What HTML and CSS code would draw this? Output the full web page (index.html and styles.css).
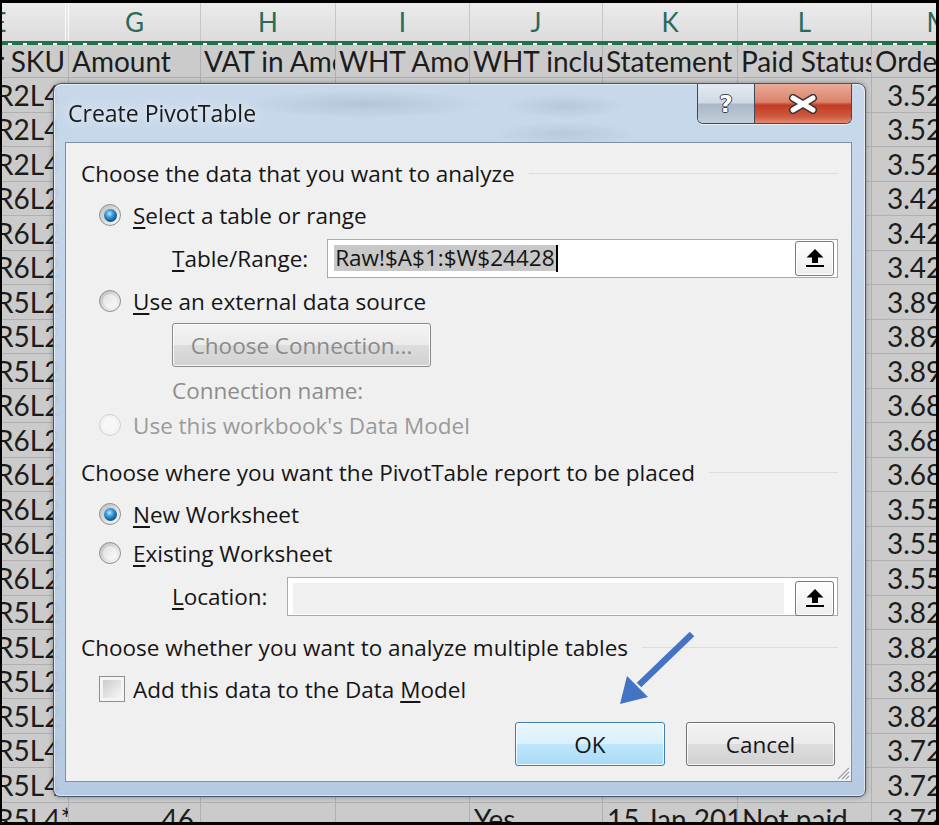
FILE: index.html
```html
<!DOCTYPE html>
<html>
<head>
    <meta charset="utf-8">
    <title>Create PivotTable</title>
    <link rel="stylesheet" href="styles.css">
</head>
<body>
<div class="screen">
    <!-- worksheet behind the dialog (cells hidden by the dialog are left empty) -->
    <div class="sheet">
        <div class="row letters">
            <div class="c col-e">E</div><div class="c col-g">G</div><div class="c col-h">H</div><div class="c col-i">I</div><div class="c col-j">J</div><div class="c col-k">K</div><div class="c col-l">L</div><div class="c col-m">M</div>
        </div>
        <div class="selbar"></div>
        <div class="row titles">
            <div class="c col-e">Seller SKU</div><div class="c col-g">Amount</div><div class="c col-h">VAT in Amount</div><div class="c col-i">WHT Amount</div><div class="c col-j">WHT included</div><div class="c col-k">Statement Date</div><div class="c col-l">Paid Status</div><div class="c col-m">Order Item</div>
        </div>
        <div class="row"><div class="c col-e">R2L4</div><div class="c col-g"></div><div class="c col-h"></div><div class="c col-i"></div><div class="c col-j"></div><div class="c col-k"></div><div class="c col-l"></div><div class="c col-m">3.52</div></div>
        <div class="row"><div class="c col-e">R2L4</div><div class="c col-g"></div><div class="c col-h"></div><div class="c col-i"></div><div class="c col-j"></div><div class="c col-k"></div><div class="c col-l"></div><div class="c col-m">3.52</div></div>
        <div class="row"><div class="c col-e">R2L4</div><div class="c col-g"></div><div class="c col-h"></div><div class="c col-i"></div><div class="c col-j"></div><div class="c col-k"></div><div class="c col-l"></div><div class="c col-m">3.52</div></div>
        <div class="row"><div class="c col-e">R6L2</div><div class="c col-g"></div><div class="c col-h"></div><div class="c col-i"></div><div class="c col-j"></div><div class="c col-k"></div><div class="c col-l"></div><div class="c col-m">3.42</div></div>
        <div class="row"><div class="c col-e">R6L2</div><div class="c col-g"></div><div class="c col-h"></div><div class="c col-i"></div><div class="c col-j"></div><div class="c col-k"></div><div class="c col-l"></div><div class="c col-m">3.42</div></div>
        <div class="row"><div class="c col-e">R6L2</div><div class="c col-g"></div><div class="c col-h"></div><div class="c col-i"></div><div class="c col-j"></div><div class="c col-k"></div><div class="c col-l"></div><div class="c col-m">3.42</div></div>
        <div class="row"><div class="c col-e">R5L2</div><div class="c col-g"></div><div class="c col-h"></div><div class="c col-i"></div><div class="c col-j"></div><div class="c col-k"></div><div class="c col-l"></div><div class="c col-m">3.89</div></div>
        <div class="row"><div class="c col-e">R5L2</div><div class="c col-g"></div><div class="c col-h"></div><div class="c col-i"></div><div class="c col-j"></div><div class="c col-k"></div><div class="c col-l"></div><div class="c col-m">3.89</div></div>
        <div class="row"><div class="c col-e">R5L2</div><div class="c col-g"></div><div class="c col-h"></div><div class="c col-i"></div><div class="c col-j"></div><div class="c col-k"></div><div class="c col-l"></div><div class="c col-m">3.89</div></div>
        <div class="row"><div class="c col-e">R6L2</div><div class="c col-g"></div><div class="c col-h"></div><div class="c col-i"></div><div class="c col-j"></div><div class="c col-k"></div><div class="c col-l"></div><div class="c col-m">3.68</div></div>
        <div class="row"><div class="c col-e">R6L2</div><div class="c col-g"></div><div class="c col-h"></div><div class="c col-i"></div><div class="c col-j"></div><div class="c col-k"></div><div class="c col-l"></div><div class="c col-m">3.68</div></div>
        <div class="row"><div class="c col-e">R6L2</div><div class="c col-g"></div><div class="c col-h"></div><div class="c col-i"></div><div class="c col-j"></div><div class="c col-k"></div><div class="c col-l"></div><div class="c col-m">3.68</div></div>
        <div class="row"><div class="c col-e">R6L2</div><div class="c col-g"></div><div class="c col-h"></div><div class="c col-i"></div><div class="c col-j"></div><div class="c col-k"></div><div class="c col-l"></div><div class="c col-m">3.55</div></div>
        <div class="row"><div class="c col-e">R6L2</div><div class="c col-g"></div><div class="c col-h"></div><div class="c col-i"></div><div class="c col-j"></div><div class="c col-k"></div><div class="c col-l"></div><div class="c col-m">3.55</div></div>
        <div class="row"><div class="c col-e">R6L2</div><div class="c col-g"></div><div class="c col-h"></div><div class="c col-i"></div><div class="c col-j"></div><div class="c col-k"></div><div class="c col-l"></div><div class="c col-m">3.55</div></div>
        <div class="row"><div class="c col-e">R5L2</div><div class="c col-g"></div><div class="c col-h"></div><div class="c col-i"></div><div class="c col-j"></div><div class="c col-k"></div><div class="c col-l"></div><div class="c col-m">3.82</div></div>
        <div class="row"><div class="c col-e">R5L2</div><div class="c col-g"></div><div class="c col-h"></div><div class="c col-i"></div><div class="c col-j"></div><div class="c col-k"></div><div class="c col-l"></div><div class="c col-m">3.82</div></div>
        <div class="row"><div class="c col-e">R5L2</div><div class="c col-g"></div><div class="c col-h"></div><div class="c col-i"></div><div class="c col-j"></div><div class="c col-k"></div><div class="c col-l"></div><div class="c col-m">3.82</div></div>
        <div class="row"><div class="c col-e">R5L2</div><div class="c col-g"></div><div class="c col-h"></div><div class="c col-i"></div><div class="c col-j"></div><div class="c col-k"></div><div class="c col-l"></div><div class="c col-m">3.82</div></div>
        <div class="row"><div class="c col-e">R5L4</div><div class="c col-g"></div><div class="c col-h"></div><div class="c col-i"></div><div class="c col-j"></div><div class="c col-k"></div><div class="c col-l"></div><div class="c col-m">3.72</div></div>
        <div class="row"><div class="c col-e">R5L4</div><div class="c col-g"></div><div class="c col-h"></div><div class="c col-i"></div><div class="c col-j"></div><div class="c col-k"></div><div class="c col-l"></div><div class="c col-m">3.72</div></div>
        <div class="row"><div class="c col-e">R5L4*</div><div class="c col-g">46</div><div class="c col-h"></div><div class="c col-i"></div><div class="c col-j">Yes</div><div class="c col-k">15 Jan 2015</div><div class="c col-l">Not paid</div><div class="c col-m">3.72</div></div>
    </div>

    <!-- Create PivotTable dialog -->
    <div class="dialog">
        <div class="titlebar">
            <span class="title">Create PivotTable</span>
            <div class="caption-buttons">
                <span class="cap-help">?</span>
                <span class="cap-close">
                    <svg width="30" height="20" viewBox="0 0 30 20">
                        <path d="M5 4 L25 16 M25 4 L5 16" stroke="#3b3030" stroke-width="8" stroke-linecap="round"/>
                        <path d="M5 4 L25 16 M25 4 L5 16" stroke="#ffffff" stroke-width="5" stroke-linecap="round"/>
                    </svg>
                </span>
            </div>
        </div>
        <div class="client">
            <div class="group-title">Choose the data that you want to analyze</div>
            <div class="option"><span class="radio checked"></span><span><u>S</u>elect a table or range</span></div>
            <div class="field">
                <span><u>T</u>able/Range:</span>
                <div class="textbox">
                    <span class="selected">Raw!$A$1:$W$24428</span><span class="caret"></span>
                    <span class="ref-btn">
                        <svg width="20" height="20" viewBox="0 0 20 20">
                            <path d="M10 1 L18.5 9.5 L13 9.5 L13 15 L7 15 L7 9.5 L1.5 9.5 Z" fill="#000"/>
                            <rect x="1" y="17" width="18" height="2" fill="#000"/>
                        </svg>
                    </span>
                </div>
            </div>
            <div class="option"><span class="radio"></span><span><u>U</u>se an external data source</span></div>
            <div class="field action"><span class="btn disabled">Choose Connection...</span></div>
            <div class="caption-line">Connection name:</div>
            <div class="option tight disabled"><span class="radio"></span><span>Use this workbook's Data Model</span></div>

            <div class="group-title placement">Choose where you want the PivotTable report to be placed</div>
            <div class="option"><span class="radio checked"></span><span><u>N</u>ew Worksheet</span></div>
            <div class="option tight"><span class="radio"></span><span><u>E</u>xisting Worksheet</span></div>
            <div class="field">
                <span><u>L</u>ocation:</span>
                <div class="textbox inactive">
                    <span class="fill"></span>
                    <span class="ref-btn">
                        <svg width="20" height="20" viewBox="0 0 20 20">
                            <path d="M10 1 L18.5 9.5 L13 9.5 L13 15 L7 15 L7 9.5 L1.5 9.5 Z" fill="#000"/>
                            <rect x="1" y="17" width="18" height="2" fill="#000"/>
                        </svg>
                    </span>
                </div>
            </div>

            <div class="group-title multi">Choose whether you want to analyze multiple tables</div>
            <div class="option check-opt"><span class="check"></span><span>Add this data to the Data <u>M</u>odel</span></div>

            <div class="footer">
                <span class="btn default">OK</span>
                <span class="btn cancel">Cancel</span>
            </div>

            <svg class="grip" width="14" height="14" viewBox="0 0 14 14">
                <path d="M13 2 L2 13 M13 6 L6 13 M13 10 L10 13" stroke="#9aa0a6" stroke-width="1.2"/>
                <path d="M14 3 L3 14 M14 7 L7 14 M14 11 L11 14" stroke="#ffffff" stroke-width="1"/>
            </svg>
        </div>
    </div>

    <!-- annotation arrow pointing at OK -->
    <svg class="arrow" width="90" height="90" viewBox="0 0 90 90">
        <line x1="82" y1="9" x2="29" y2="60" stroke="#4472c4" stroke-width="6.5"/>
        <path d="M10 79 L17 51 L38 72 Z" fill="#4472c4"/>
    </svg>
</div>
</body>
</html>
```

FILE: styles.css
```css
body {
    margin: 0;
    background: #000000;
}
.screen {
    position: relative;
    width: 939px;
    height: 825px;
    box-sizing: border-box;
    border: 3px solid #000000;
    border-left-width: 2px;
    overflow: hidden;
    background: #cbcbcb;
    font-family: Lato, "Liberation Sans", sans-serif;
}

/* worksheet */
.sheet {
    margin-left: -69px;
    width: 1073px;
}
.row {
    display: flex;
    height: 34.5px;
}
.c {
    box-sizing: border-box;
    display: flex;
    align-items: center;
    padding: 0 4px;
    border-right: 1px solid #b0b0b0;
    border-bottom: 1px solid #b0b0b0;
    white-space: nowrap;
    overflow: hidden;
    font-size: 28px;
    color: #1c1c1c;
}
.col-e { width: 136px; justify-content: flex-end; padding-right: 4px; }
.col-g { width: 132px; justify-content: flex-end; padding-right: 6px; }
.col-h { width: 135px; justify-content: flex-end; }
.col-i { width: 134px; justify-content: flex-end; }
.col-j { width: 133px; }
.col-k { width: 135px; }
.col-l { width: 134px; }
.col-m { width: 134px; padding-left: 15px; }

/* SKU cells are cut by the dialog frame; keep their start where the reference shows it */
.row .col-e {
    justify-content: flex-start;
    padding-left: 63px;
    padding-right: 0;
}
.letters .c {
    justify-content: center;
    padding: 0;
    border-bottom: none;
    border-right-color: #c6c6c6;
    font-size: 26px;
    color: #2b6a5b;
}
.letters {
    height: 38px;
    background: linear-gradient(#ebebeb, #dcdcdc);
}
.letters .col-e {
    border-right: 4px double #fbfbfb;
}
.selbar {
    height: 4px;
    background: repeating-linear-gradient(90deg, #ffffff 0 4px, transparent 4px 15px) left bottom / 100% 2px no-repeat, #217346;
}
.titles {
    height: 33px;
}
.titles .c {
    justify-content: flex-start;
    padding-left: 3px;
}
.titles .col-e {
    justify-content: flex-end;
    padding-right: 3px;
}

/* dialog window */
.dialog {
    position: absolute;
    left: 51px;
    top: 80px;
    width: 813px;
    height: 714px;
    box-sizing: border-box;
    display: flex;
    flex-direction: column;
    padding: 0 13px 14px 11px;
    border: 1px solid #43566c;
    border-radius: 8px 8px 7px 7px;
    background: linear-gradient(rgba(200, 218, 238, 0.9), rgba(180, 203, 229, 0.9));
    backdrop-filter: blur(9px);
    box-shadow: inset 0 0 0 1px rgba(255, 255, 255, 0.55), 0 0 5px rgba(0, 0, 0, 0.35);
    font-family: "Open Sans", "Noto Sans", sans-serif;
    font-size: 22.5px;
    color: #151515;
}
.titlebar {
    height: 58px;
    display: flex;
    align-items: flex-start;
    background: radial-gradient(ellipse 120px 14px at 300px 20px, rgba(120, 140, 165, 0.25), transparent),
                radial-gradient(ellipse 60px 12px at 500px 22px, rgba(120, 140, 165, 0.22), transparent),
                radial-gradient(ellipse 70px 12px at 500px 50px, rgba(120, 140, 165, 0.2), transparent);
}
.title {
    align-self: center;
    padding-left: 3px;
    font-size: 23px;
    color: #1a1a1a;
    text-shadow: 0 0 10px rgba(255, 255, 255, 0.9);
}
.caption-buttons {
    margin-left: auto;
    display: flex;
    height: 39px;
    border: 1px solid #394a5e;
    border-top: none;
    border-radius: 0 0 6px 6px;
    overflow: hidden;
    box-shadow: 0 1px 0 rgba(255, 255, 255, 0.6);
}
.cap-help {
    width: 56px;
    display: flex;
    align-items: center;
    justify-content: center;
    background: linear-gradient(#e4eaf0 0%, #d0d9e3 48%, #aab7c6 52%, #c3cedb 100%);
    font-family: "DejaVu Sans", sans-serif;
    font-weight: bold;
    font-size: 23px;
    color: #ffffff;
    text-shadow: 1px 0 0 #39414c, -1px 0 0 #39414c, 0 1px 0 #39414c, 0 -1px 0 #39414c;
}
.cap-close {
    width: 96px;
    display: flex;
    align-items: center;
    justify-content: center;
    border-left: 1px solid #394a5e;
    background: linear-gradient(#eaab98 0%, #da846d 46%, #c33c23 54%, #cd573d 82%, #e2896f 100%);
}

.client {
    position: relative;
    flex: 1;
    display: flex;
    flex-direction: column;
    padding: 10px 13px 0 15px;
    border: 1px solid #7f90a4;
    background: #f0f0f0;
}
.group-title {
    height: 40px;
    display: flex;
    align-items: center;
    gap: 14px;
}
.group-title::after {
    content: "";
    flex: 1;
    height: 1px;
    margin-top: 1px;
    background: #d7dee5;
}
.group-title.placement { margin-top: 8px; }
.group-title.multi { margin-top: 10px; }

u {
    text-decoration-thickness: 2px;
    text-underline-offset: 3px;
}

.option {
    height: 38px;
    margin-top: 3px;
    display: flex;
    align-items: center;
    gap: 12px;
    padding-left: 18px;
}
.option.tight { margin-top: 1px; }
.option.disabled { color: #9a9a9a; }
.option.check-opt { gap: 8px; }

.radio {
    box-sizing: border-box;
    width: 22px;
    height: 22px;
    flex: none;
    display: flex;
    align-items: center;
    justify-content: center;
    border: 1px solid #8f8f8f;
    border-radius: 50%;
    background: linear-gradient(135deg, #bdbdbd, #fbfbfb);
}
.radio::after {
    content: "";
    width: 14px;
    height: 14px;
    border-radius: 50%;
    background: linear-gradient(135deg, #dedede, #fdfdfd);
}
.radio.checked::after {
    width: 13px;
    height: 13px;
    background: radial-gradient(circle at 42% 36%, #bfe9ff 0, #3fa3df 30%, #15609f 62%, #0b335f 100%);
}
.disabled .radio {
    border-color: #d0d0d0;
    background: #f3f3f3;
}
.disabled .radio::after {
    background: #f7f7f7;
}
.check {
    box-sizing: border-box;
    width: 26px;
    height: 26px;
    flex: none;
    display: flex;
    align-items: center;
    justify-content: center;
    border: 1px solid #8e8f8f;
    background: #f5f5f5;
}
.check::after {
    content: "";
    width: 18px;
    height: 18px;
    background: linear-gradient(135deg, #cbcbcb, #f7f7f7);
}

.field {
    height: 42px;
    margin-top: 3px;
    display: flex;
    align-items: center;
    gap: 19px;
    padding-left: 91px;
}
.field.action { height: 44px; }
.caption-line {
    height: 30px;
    margin-top: 8px;
    padding-left: 91px;
    display: flex;
    align-items: center;
    color: #8d8d8d;
}

.textbox {
    flex: 1;
    height: 39px;
    box-sizing: border-box;
    display: flex;
    align-items: center;
    padding: 0 3px 0 6px;
    border: 1px solid #a9a9a9;
    background: #ffffff;
}
.selected {
    line-height: 26px;
    padding: 0 1px;
    background: #c8c8c8;
    white-space: nowrap;
}
.caret {
    width: 2px;
    height: 27px;
    background: #000000;
}
.textbox.inactive {
    padding: 5px 3px 1px 5px;
    align-items: stretch;
}
.fill {
    flex: 1;
    margin-right: 11px;
    background: #f0f0f0;
}
.ref-btn {
    box-sizing: border-box;
    width: 39px;
    height: 35px;
    margin-left: auto;
    align-self: center;
    display: flex;
    align-items: center;
    justify-content: center;
    border: 1px solid #7a7a7a;
    border-radius: 3px;
    background: linear-gradient(#ffffff, #ededed);
    box-shadow: inset 0 0 0 1px #ffffff;
}

.btn {
    box-sizing: border-box;
    width: 150px;
    height: 44px;
    display: flex;
    align-items: center;
    justify-content: center;
    border: 1px solid #707070;
    border-radius: 3px;
    background: linear-gradient(#f3f3f3 0%, #ebebeb 50%, #dddddd 50%, #d1d1d1 100%);
    box-shadow: inset 0 0 0 1px rgba(255, 255, 255, 0.85);
}
.btn.disabled {
    width: 259px;
    color: #8a8a8a;
    border-color: #8a8a8a;
}
.btn.default {
    border-color: #3c7fb1;
    background: linear-gradient(#eaf6fd 0%, #d9f0fc 50%, #bee6fd 50%, #a9dbf6 100%);
}
.btn.cancel { width: 149px; }
.footer {
    margin-top: 14px;
    display: flex;
    justify-content: flex-end;
    gap: 21px;
    padding-right: 3px;
}
.grip {
    position: absolute;
    right: 1px;
    bottom: 1px;
}

/* annotation */
.arrow {
    position: absolute;
    left: 608px;
    top: 622px;
}
```
